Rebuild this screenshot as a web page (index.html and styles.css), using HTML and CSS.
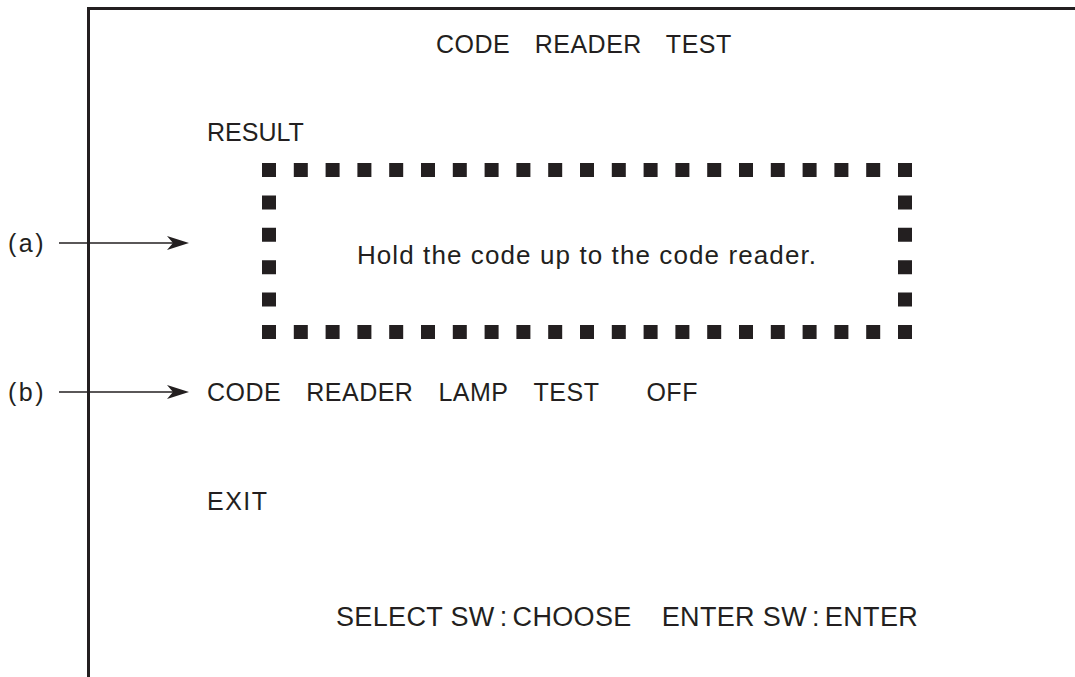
FILE: index.html
```html
<!DOCTYPE html>
<html>
<head>
    <title>Code Reader Test</title>
    <link rel="stylesheet" href="styles.css">
</head>
<body>
    <div class="frame">
        <h1 class="title">CODE READER TEST</h1>
        <div class="label">RESULT</div>
        <div class="result-box">
            <svg class="dots" width="650" height="176" viewBox="0 0 650 176">
                <line x1="0" y1="7" x2="650" y2="7" stroke-dasharray="14 17.8"/>
                <line x1="0" y1="169" x2="650" y2="169" stroke-dasharray="14 17.8"/>
                <line x1="7" y1="0" x2="7" y2="176" stroke-dasharray="14 18.4"/>
                <line x1="643" y1="0" x2="643" y2="176" stroke-dasharray="14 18.4"/>
            </svg>
            <p class="message">Hold the code up to the code reader.</p>
        </div>
        <div class="item lamp">
            <span>CODE</span><span>READER</span><span>LAMP</span><span>TEST</span><span class="value">OFF</span>
        </div>
        <div class="item exit">EXIT</div>
        <div class="footer">
            <span>SELECT SW<span class="colon">:</span>CHOOSE</span>
            <span>ENTER SW<span class="colon">:</span>ENTER</span>
        </div>
    </div>

    <!-- callouts -->
    <div class="callout callout-a">
        <span class="tag">(a)</span>
        <svg width="132" height="16" viewBox="0 0 132 16">
            <line x1="0" y1="8" x2="118" y2="8"/>
            <path d="M130 8 L108 1 L114 8 L108 15 Z"/>
        </svg>
    </div>
    <div class="callout callout-b">
        <span class="tag">(b)</span>
        <svg width="132" height="16" viewBox="0 0 132 16">
            <line x1="0" y1="8" x2="118" y2="8"/>
            <path d="M130 8 L108 1 L114 8 L108 15 Z"/>
        </svg>
    </div>
</body>
</html>
```

FILE: styles.css
```css
body {
    margin: 0;
    background-color: white;
    color: #231f20;
    font-family: "Liberation Sans", Arial, sans-serif;
    font-size: 25px;
    line-height: 30px;
}
.frame {
    margin: 7px 0 0 87px;
    height: 670px;
    box-sizing: border-box;
    border-top: 3px solid #231f20;
    border-left: 3px solid #231f20;
    padding: 19px 0 0 117px;
}
.title {
    margin: 0 0 0 229px;
    font-size: 25px;
    font-weight: normal;
    letter-spacing: 0.5px;
    word-spacing: 17px;
}
.label {
    margin-top: 58px;
}
.result-box {
    position: relative;
    width: 650px;
    height: 176px;
    margin: 16px 0 0 55px;
    display: flex;
    align-items: center;
    justify-content: center;
    box-sizing: border-box;
    padding-top: 8px;
}
.dots {
    position: absolute;
    left: 0;
    top: 0;
}
.dots line {
    stroke: #231f20;
    stroke-width: 14;
}
.message {
    margin: 0;
    font-size: 26px;
    letter-spacing: 1.1px;
}
.item {
    display: flex;
    gap: 25px;
    letter-spacing: 0.5px;
}
.lamp {
    margin-top: 38px;
}
.lamp .value {
    margin-left: 22px;
}
.exit {
    margin-top: 79px;
    letter-spacing: 1.5px;
}
.footer {
    margin: 86px 0 0 129px;
    display: flex;
    gap: 30px;
    font-size: 27px;
    letter-spacing: 0.35px;
}
.colon {
    margin: 0 5px;
}
.callout {
    position: absolute;
    left: 8px;
    display: flex;
    align-items: center;
    gap: 13px;
}
.callout-a {
    top: 228px;
}
.callout-b {
    top: 377px;
}
.tag {
    letter-spacing: 2.5px;
}
.callout line {
    stroke: #231f20;
    stroke-width: 1.6;
}
.callout path {
    fill: #231f20;
}
```
